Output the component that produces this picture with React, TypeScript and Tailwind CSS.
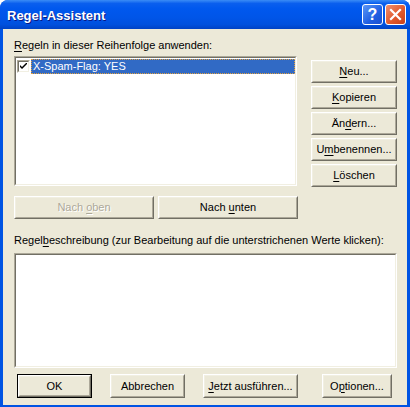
import type { ReactNode } from 'react';

const font = { fontFamily: '"Liberation Sans", Arial, sans-serif' };

function U({ children }: { children: ReactNode }) {
    return <span className="underline underline-offset-[2px]">{children}</span>;
}

function Btn({
    children,
    className = '',
    disabled = false,
    primary = false,
}: {
    children: ReactNode;
    className?: string;
    disabled?: boolean;
    primary?: boolean;
}) {
    const inner = (
        <div className="h-full border border-t-white border-l-white border-b-[#716f64] border-r-[#716f64]">
            <div className="h-full flex items-center justify-center border border-t-[#f1efe2] border-l-[#f1efe2] border-b-[#aca899] border-r-[#aca899] bg-[#ece9d8]">
                {disabled ? (
                    <span className="text-[#aca899] [text-shadow:1px_1px_0_#fff]">{children}</span>
                ) : (
                    <span className="text-black">{children}</span>
                )}
            </div>
        </div>
    );
    if (primary) {
        return <div className={`border border-black ${className}`}>{inner}</div>;
    }
    return <div className={className}>{inner}</div>;
}

function Sunken({ children, className = '' }: { children?: ReactNode; className?: string }) {
    return (
        <div className={`border border-t-[#aca899] border-l-[#aca899] border-b-white border-r-white ${className}`}>
            <div className="h-full border border-t-[#716f64] border-l-[#716f64] border-b-[#f1efe2] border-r-[#f1efe2] bg-white">
                {children}
            </div>
        </div>
    );
}

export default function App() {
    return (
        <div className="w-[410px] h-[407px] flex flex-col bg-[#0054e3] rounded-t-[8px] overflow-hidden text-[11px] leading-[13px]" style={font}>
            {/* title bar */}
            <div className="h-[29px] shrink-0 flex items-center pl-[7px] pr-[4px] bg-[linear-gradient(to_bottom,#3a8cf6_0%,#0a5fee_12%,#0058ee_30%,#0055e8_60%,#0050dd_85%,#0042c4_100%)]">
                <span className="text-white font-bold text-[13px] [text-shadow:1px_1px_0_#0a1883] flex-1 pt-[1px]">
                    Regel-Assistent
                </span>
                <div className="flex gap-[2px]">
                    <div className="w-[21px] h-[21px] rounded-[3px] border border-white bg-[linear-gradient(135deg,#5c97f6,#1f5fe2_60%,#1a4fd0)] flex items-center justify-center">
                        <span className="text-white font-bold text-[16px] leading-none">?</span>
                    </div>
                    <div className="w-[21px] h-[21px] rounded-[3px] border border-white bg-[linear-gradient(135deg,#f09070,#e15a2e_55%,#c9401a)] flex items-center justify-center">
                        <svg width="13" height="13" viewBox="0 0 13 13">
                            <path d="M2 2 L11 11 M11 2 L2 11" stroke="white" strokeWidth="2.2" strokeLinecap="square" />
                        </svg>
                    </div>
                </div>
            </div>

            {/* client area */}
            <div className="flex-1 mx-[3px] mb-[3px] bg-[#ece9d8] flex flex-col pl-[11px] pr-[10px] pt-[10px] pb-[7px] text-black">
                <div className="h-[13px]">
                    <U>R</U>egeln in dieser Reihenfolge anwenden:
                </div>

                <div className="flex mt-[4px]">
                    <Sunken className="w-[283px] h-[130px]">
                        <div className="flex items-center h-[15px] mt-[1px] pl-[1px]">
                            <div className="w-[13px] h-[13px] border border-t-[#aca899] border-l-[#aca899] border-b-white border-r-white">
                                <div className="w-full h-full border border-t-[#716f64] border-l-[#716f64] border-b-[#f1efe2] border-r-[#f1efe2] bg-white flex items-center justify-center">
                                    <svg width="7" height="7" viewBox="0 0 7 7">
                                        <path d="M0 2 L0 4 L2 6 L7 1 L7 -1 L2 4 Z" fill="black" />
                                    </svg>
                                </div>
                            </div>
                            <div className="ml-[1px] flex-1 h-[15px] bg-[#316ac5] text-white px-[2px] flex items-center outline-1 outline-dotted outline-[#e0a040] -outline-offset-1">
                                X-Spam-Flag: YES
                            </div>
                        </div>
                    </Sunken>
                    <div className="ml-auto mt-[4px] w-[86px] flex flex-col gap-[3px]">
                        <Btn className="h-[23px]"><U>N</U>eu...</Btn>
                        <Btn className="h-[23px]"><U>K</U>opieren</Btn>
                        <Btn className="h-[23px]">Än<U>d</U>ern...</Btn>
                        <Btn className="h-[23px]">U<U>m</U>benennen...</Btn>
                        <Btn className="h-[23px]"><U>L</U>öschen</Btn>
                    </div>
                </div>

                <div className="flex gap-[4px] mt-[9px]">
                    <Btn className="w-[140px] h-[23px]" disabled>Nach <U>o</U>ben</Btn>
                    <Btn className="w-[140px] h-[23px]">Nach <U>u</U>nten</Btn>
                </div>

                <div className="h-[13px] mt-[15px]">
                    Regel<U>b</U>eschreibung (zur Bearbeitung auf die unterstrichenen Werte klicken):
                </div>

                <Sunken className="h-[115px] mt-[6px]" />

                <div className="flex mt-[6px] pl-[3px]">
                    <Btn className="w-[75px] h-[24px]" primary>OK</Btn>
                    <Btn className="w-[75px] h-[24px] ml-[18px]">Abbrechen</Btn>
                    <Btn className="w-[95px] h-[24px] ml-[18px]"><U>J</U>etzt ausführen...</Btn>
                    <Btn className="w-[70px] h-[24px] ml-[24px]">O<U>p</U>tionen...</Btn>
                </div>
            </div>
        </div>
    );
}
